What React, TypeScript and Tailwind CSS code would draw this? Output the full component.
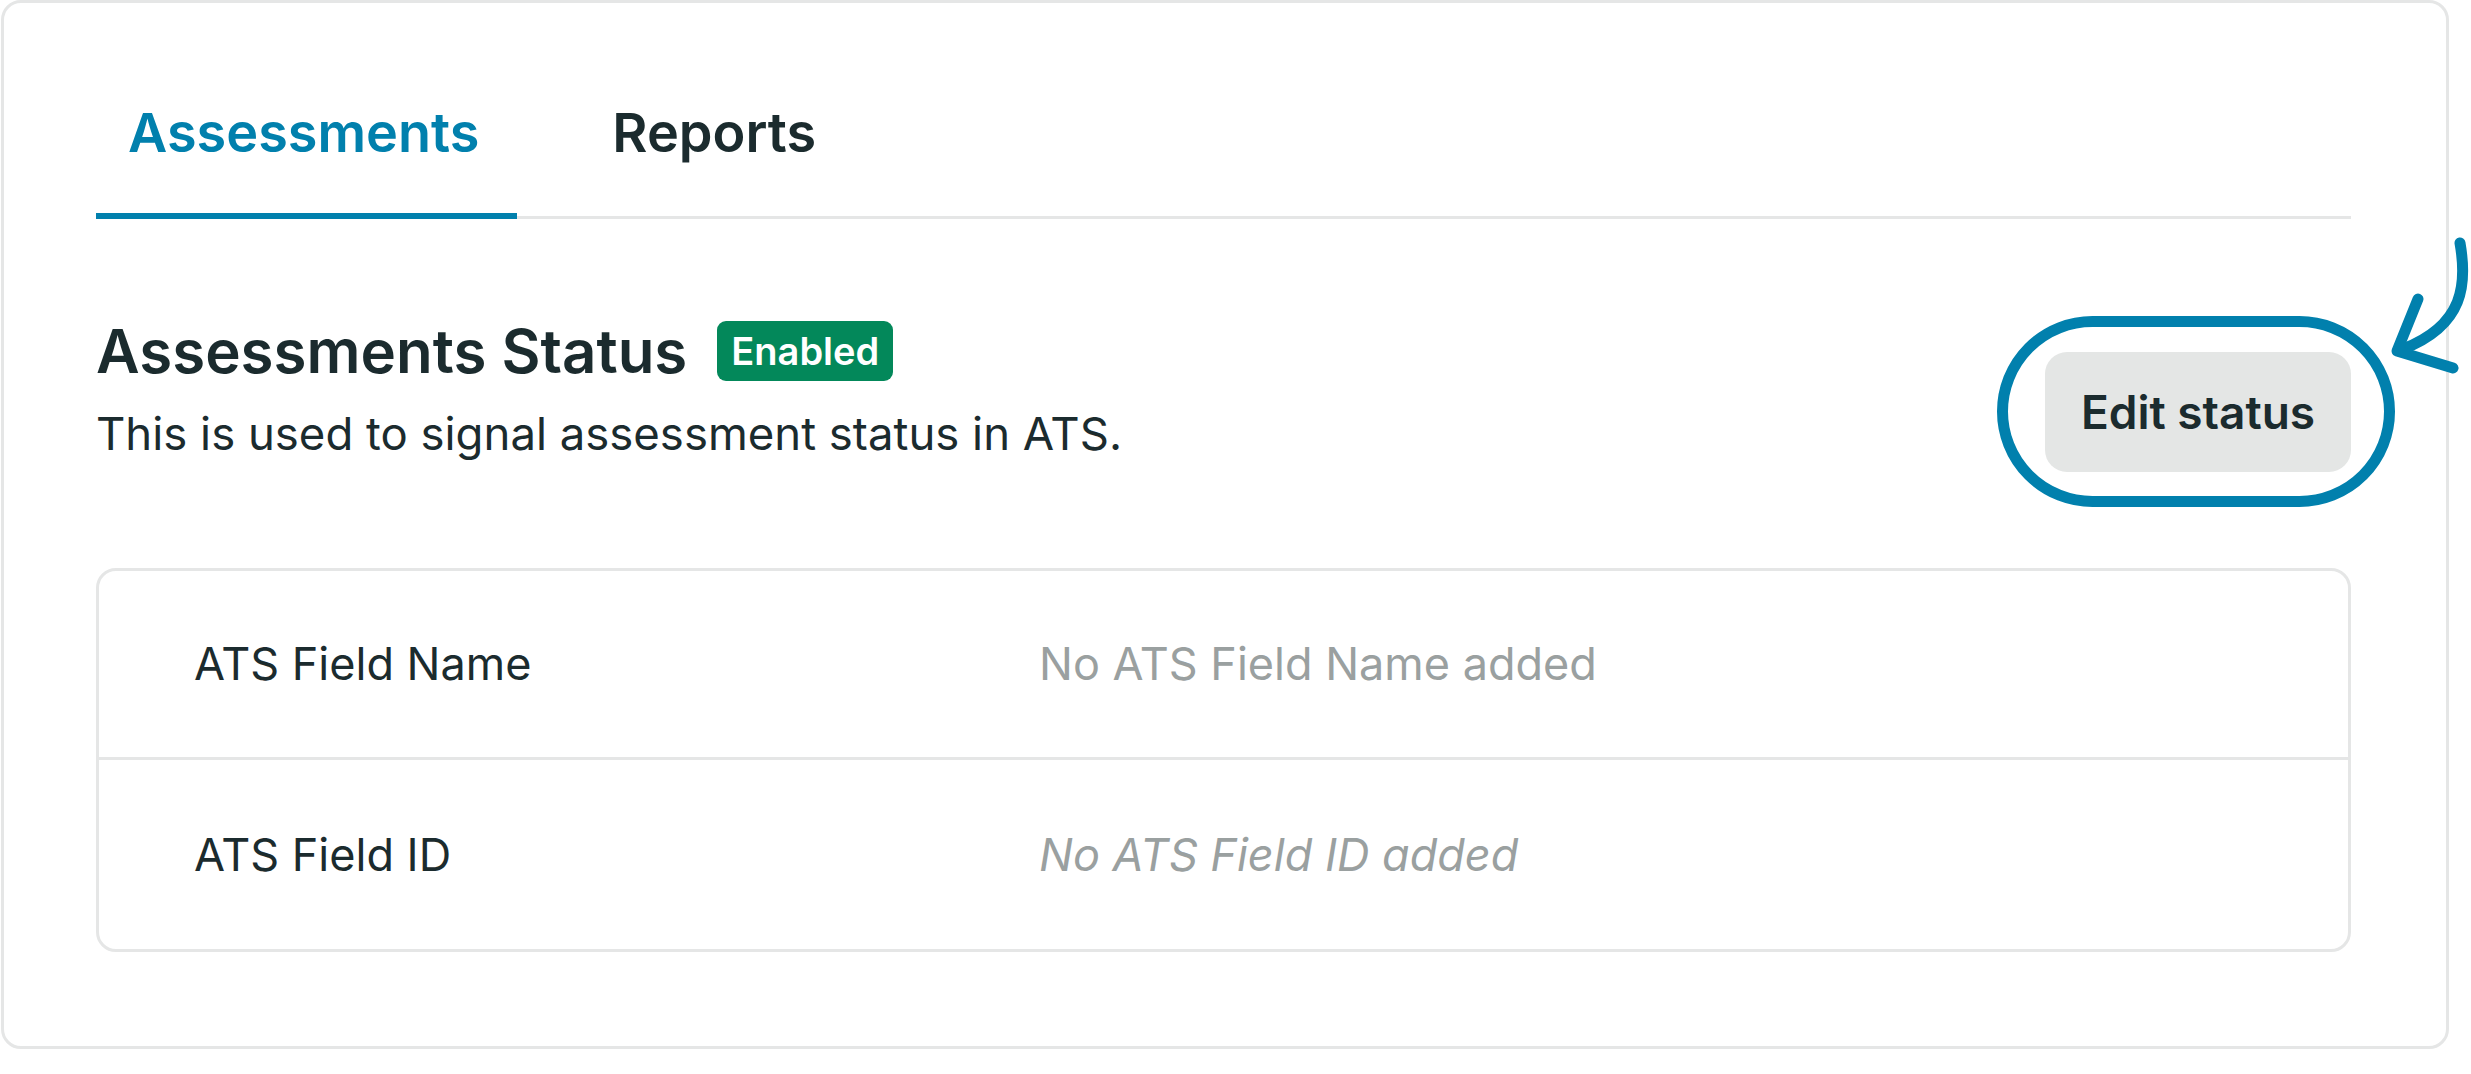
import { useState } from "react";
import { clsx } from "clsx";

const TABS = ["Assessments", "Reports"] as const;

const FIELDS: Array<{ label: string; empty: string; italic?: boolean }> = [
  { label: "ATS Field Name", empty: "No ATS Field Name added" },
  { label: "ATS Field ID", empty: "No ATS Field ID added", italic: true }
];

function Tabs() {
  const [active, setActive] = useState<(typeof TABS)[number]>("Assessments");

  return (
    <div className="flex gap-[63px] border-b-[3px] border-[#e5e6e6]">
      {TABS.map((tab) => (
        <button
          key={tab}
          onClick={() => setActive(tab)}
          className={clsx(
            "-mb-[3px] border-b-[6px] pr-[38px] pb-[47px] pl-[32px] text-[54px] leading-[66px] font-semibold",
            active === tab
              ? "border-[#0180ad] text-[#0180ad]"
              : "border-transparent text-[#1b2b2e]"
          )}
        >
          {tab}
        </button>
      ))}
    </div>
  );
}

function EditStatusButton() {
  return (
    <div className="relative mt-[37px]">
      <button className="h-[120px] w-[306px] rounded-[22px] bg-[#e4e6e5] text-[46px] font-semibold text-[#1b2b2e]">
        Edit status
      </button>
      {/* annotation ring + arrow */}
      <div className="pointer-events-none absolute -top-[36px] -right-[44px] -bottom-[35px] -left-[48px] rounded-full border-[11px] border-[#0180ad]" />
      <svg
        className="pointer-events-none absolute left-[334px] -top-[131px]"
        width="91"
        height="170"
        viewBox="0 0 91 170"
        fill="none"
        stroke="#0180ad"
        strokeWidth="11"
        strokeLinecap="round"
        strokeLinejoin="round"
      >
        <path d="M81 22 C88 62, 86 104, 24 128" />
        <path d="M39 78 L18 130 L74 147" />
      </svg>
    </div>
  );
}

export default function App() {
  return (
    <div className="min-h-screen bg-white font-['Inter',sans-serif] text-[#1b2b2e]">
      <section className="ml-px w-[2448px] rounded-[20px] border-[3px] border-[#e5e6e6] pt-[97px] pr-[95px] pb-[94px] pl-[92px]">
        <Tabs />

        <div className="mt-[96px] flex items-start justify-between">
          <div>
            <div className="flex items-center gap-[30px]">
              <h2 className="text-[60px] leading-[72px] font-semibold">Assessments Status</h2>
              <span className="flex h-[60px] items-center rounded-[9px] bg-[#03885a] px-[14px] text-[38px] font-semibold text-white">
                Enabled
              </span>
            </div>
            <p className="mt-[14px] text-[45.5px] leading-[66px]">
              This is used to signal assessment status in ATS.
            </p>
          </div>
          <EditStatusButton />
        </div>

        <div className="mt-[96px] rounded-[20px] border-[3px] border-[#e5e6e6]">
          {FIELDS.map((field, i) => (
            <div
              key={field.label}
              className={clsx(
                "flex h-[189px] items-center pl-[95px] text-[45px] leading-[66px]",
                i < FIELDS.length - 1 && "border-b-[3px] border-[#e5e6e6]"
              )}
            >
              <span className="w-[845px]">{field.label}</span>
              <span className={clsx("text-[#9aa0a0]", field.italic && "italic")}>{field.empty}</span>
            </div>
          ))}
        </div>
      </section>
    </div>
  );
}
